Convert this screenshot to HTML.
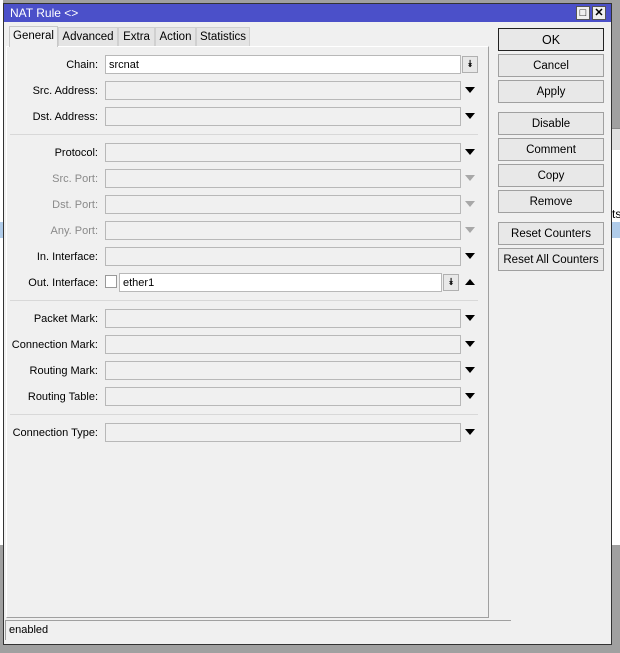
<!DOCTYPE html>
<html><head><style>
*{box-sizing:border-box;margin:0;padding:0}
body{width:620px;height:653px;position:relative;background:#a0a0a0;font-family:"Liberation Sans",sans-serif;font-size:11px;color:#000;overflow:hidden}
.a{position:absolute;white-space:nowrap}
.win{left:3px;top:3px;width:609px;height:642px;background:#f0f0f0;border:1px solid #333}
.title{left:4px;top:4px;width:607px;height:18px;background:#4b50c9;color:#fff;font-size:12px;line-height:18px;padding-left:6px}
.tb{top:6px;width:14px;height:14px;background:#f0f0f0;border:1px solid #555;color:#000;font-size:11px;line-height:12px;text-align:center;font-weight:bold}
.tab{top:27px;height:19px;background:#e4e4e4;border:1px solid #d0d0d0;border-bottom:none;line-height:19px;text-align:center;font-size:11.5px}
.panel{left:6px;top:46px;width:483px;height:572px;border-right:1px solid #a0a0a0;border-bottom:1px solid #a0a0a0;border-left:1px solid #fff;border-top:1px solid #fff}
.lbl{width:94px;left:4px;text-align:right;height:19px;line-height:20px}
.in{left:105px;width:356px;height:19px;border:1px solid #b8b8b8;background:#f0f0f0;line-height:18px;padding-left:3px}
.arr{left:465px;width:0;height:0;border-left:5px solid transparent;border-right:5px solid transparent;border-top:6px solid #000}
.g{color:#8a8a8a}
.ga{border-top-color:#a8a8a8}
.sep{left:10px;width:468px;height:1px;background:#d8d8d8}
.btn{left:498px;width:106px;height:23px;border:1px solid #a0a0a0;background:#e8e8e8;text-align:center;line-height:22px;font-size:11.5px}
.dd{width:16px;height:17px;border:1px solid #b0b0b0;background:#e8e8e8;font-size:10px;text-align:center;line-height:15px}
</style></head><body>
<div class="a" style="left:612px;top:0;width:8px;height:128px;background:#a0a0a0"></div>
<div class="a" style="left:612px;top:128px;width:8px;height:22px;background:#e0e0e0;border-top:1px solid #888"></div>
<div class="a" style="left:612px;top:150px;width:8px;height:395px;background:#fff"></div>
<div class="a" style="left:612px;top:207px;font-size:12px">ts</div>
<div class="a" style="left:612px;top:222px;width:8px;height:16px;background:#b0ccea"></div>
<div class="a" style="left:0;top:0;width:3px;height:545px;background:#fff"></div>
<div class="a" style="left:0;top:222px;width:3px;height:16px;background:#b0ccea"></div>
<div class="a win"></div>
<div class="a title">NAT Rule &lt;&gt;</div>
<div class="a tb" style="left:576px">□</div>
<div class="a tb" style="left:592px">✕</div>
<div class="a tab" style="left:9px;width:49px;background:#f0f0f0;top:26px;height:21px;border-color:#c8c8c8;z-index:2">General</div>
<div class="a tab" style="left:58px;width:60px">Advanced</div>
<div class="a tab" style="left:118px;width:37px">Extra</div>
<div class="a tab" style="left:155px;width:41px">Action</div>
<div class="a tab" style="left:196px;width:54px">Statistics</div>
<div class="a panel"></div>

<div class="a lbl" style="top:55px">Chain:</div>
<div class="a in" style="top:55px;background:#fff">srcnat</div>
<div class="a dd" style="left:462px;top:56px">⯯</div>

<div class="a lbl" style="top:81px">Src. Address:</div><div class="a in" style="top:81px"></div><div class="a arr" style="top:87px"></div>
<div class="a lbl" style="top:107px">Dst. Address:</div><div class="a in" style="top:107px"></div><div class="a arr" style="top:113px"></div>
<div class="a sep" style="top:134px"></div>
<div class="a lbl" style="top:143px">Protocol:</div><div class="a in" style="top:143px"></div><div class="a arr" style="top:149px"></div>
<div class="a lbl g" style="top:169px">Src. Port:</div><div class="a in" style="top:169px"></div><div class="a arr ga" style="top:175px"></div>
<div class="a lbl g" style="top:195px">Dst. Port:</div><div class="a in" style="top:195px"></div><div class="a arr ga" style="top:201px"></div>
<div class="a lbl g" style="top:221px">Any. Port:</div><div class="a in" style="top:221px"></div><div class="a arr ga" style="top:227px"></div>
<div class="a lbl" style="top:247px">In. Interface:</div><div class="a in" style="top:247px"></div><div class="a arr" style="top:253px"></div>
<div class="a lbl" style="top:273px">Out. Interface:</div>
<div class="a" style="left:105px;top:275px;width:12px;height:13px;border:1px solid #999;background:#fff"></div>
<div class="a in" style="top:273px;left:119px;width:323px;background:#fff">ether1</div>
<div class="a dd" style="left:443px;top:274px">⯯</div>
<div class="a" style="left:465px;top:279px;width:0;height:0;border-left:5px solid transparent;border-right:5px solid transparent;border-bottom:6px solid #000"></div>
<div class="a sep" style="top:300px"></div>
<div class="a lbl" style="top:309px">Packet Mark:</div><div class="a in" style="top:309px"></div><div class="a arr" style="top:315px"></div>
<div class="a lbl" style="top:335px">Connection Mark:</div><div class="a in" style="top:335px"></div><div class="a arr" style="top:341px"></div>
<div class="a lbl" style="top:361px">Routing Mark:</div><div class="a in" style="top:361px"></div><div class="a arr" style="top:367px"></div>
<div class="a lbl" style="top:387px">Routing Table:</div><div class="a in" style="top:387px"></div><div class="a arr" style="top:393px"></div>
<div class="a sep" style="top:414px"></div>
<div class="a lbl" style="top:423px">Connection Type:</div><div class="a in" style="top:423px"></div><div class="a arr" style="top:429px"></div>

<div class="a btn" style="top:28px;border-color:#222;font-size:12.5px">OK</div>
<div class="a btn" style="top:54px">Cancel</div>
<div class="a btn" style="top:80px">Apply</div>
<div class="a btn" style="top:112px">Disable</div>
<div class="a btn" style="top:138px">Comment</div>
<div class="a btn" style="top:164px">Copy</div>
<div class="a btn" style="top:190px">Remove</div>
<div class="a btn" style="top:222px">Reset Counters</div>
<div class="a btn" style="top:248px">Reset All Counters</div>

<div class="a" style="left:5px;top:620px;width:506px;height:20px;border-top:1px solid #a0a0a0;border-left:1px solid #a0a0a0;line-height:19px;padding-left:3px">enabled</div>
</body></html>
